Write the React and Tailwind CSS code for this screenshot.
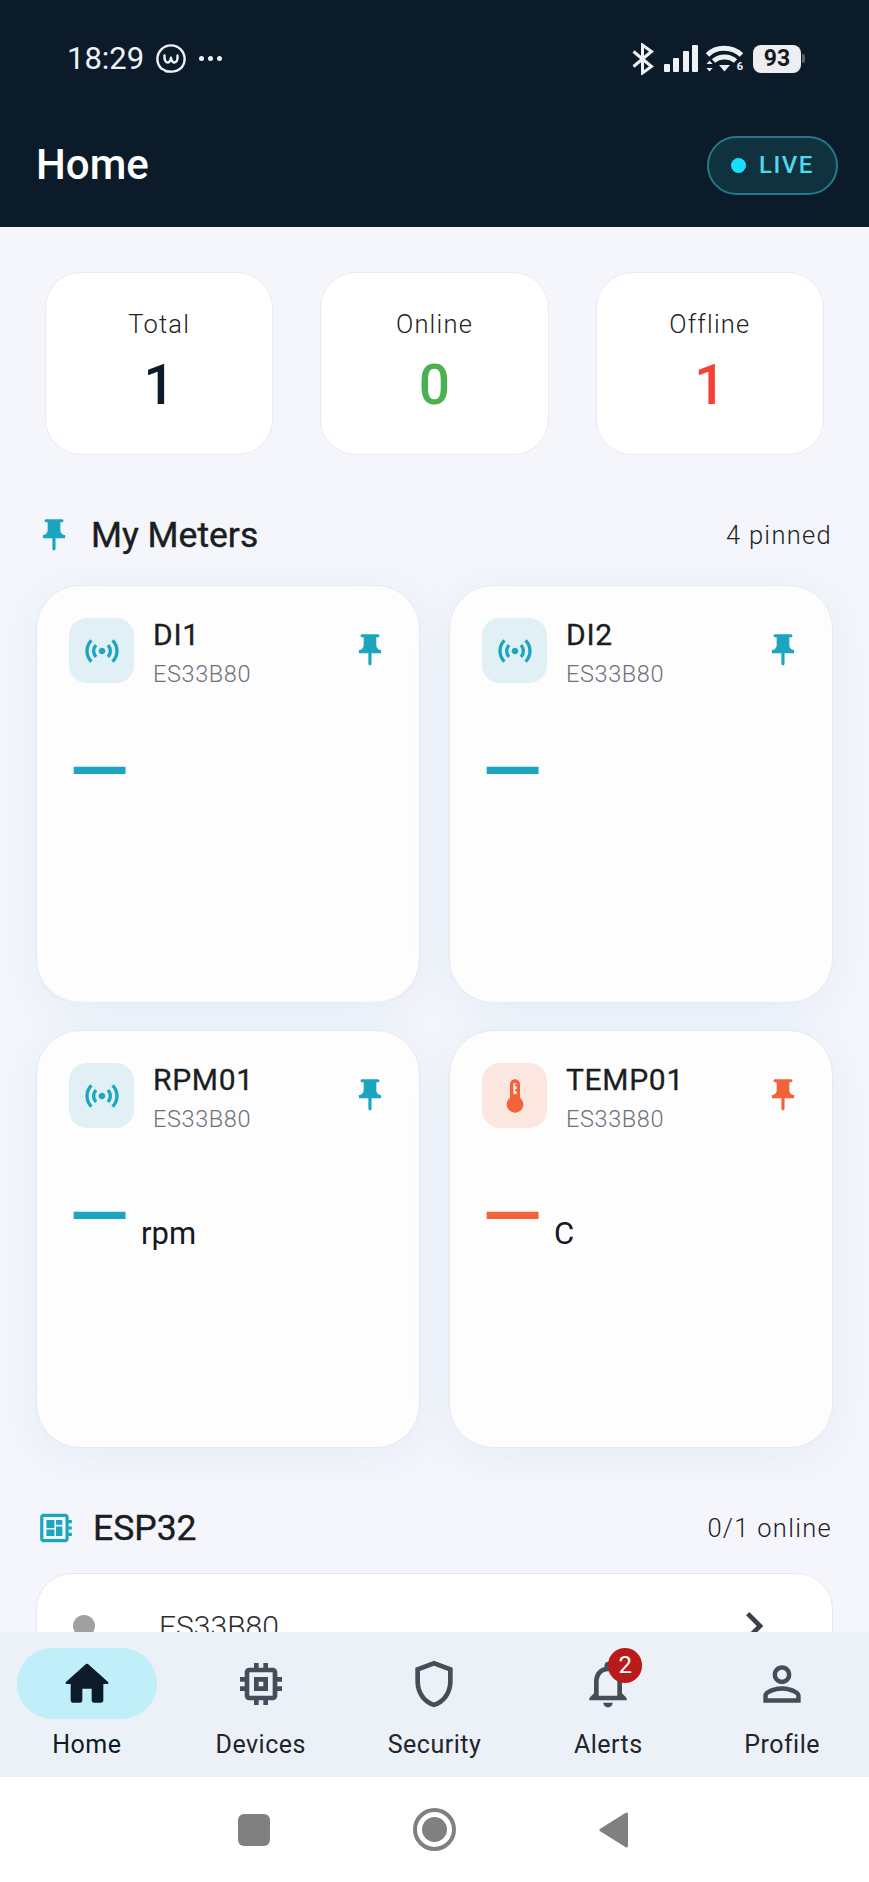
import React from 'react';

const paths = {
  pin: 'M16 9V4h1c.55 0 1-.45 1-1s-.45-1-1-1H7c-.55 0-1 .45-1 1s.45 1 1 1h1v5c0 1.66-1.34 3-3 3v2h5.97v7l1 1 1-1v-7H19v-2c-1.66 0-3-1.34-3-3z',
  sensors: 'M7.76 16.24C6.67 15.16 6 13.66 6 12s.67-3.16 1.76-4.24l1.42 1.42C8.45 9.9 8 10.9 8 12c0 1.1.45 2.1 1.17 2.83l-1.41 1.41zm8.48 0C17.33 15.16 18 13.66 18 12s-.67-3.16-1.76-4.24l-1.42 1.42C15.55 9.9 16 10.9 16 12c0 1.1-.45 2.1-1.17 2.83l1.41 1.41zM12 10c-1.1 0-2 .9-2 2s.9 2 2 2 2-.9 2-2-.9-2-2-2zm8 2c0 2.21-.9 4.21-2.35 5.65l1.42 1.42C20.88 17.26 22 14.76 22 12s-1.12-5.26-2.93-7.07l-1.42 1.42C19.1 7.79 20 9.79 20 12zM6.35 6.35L4.93 4.93C3.12 6.74 2 9.24 2 12s1.12 5.26 2.93 7.07l1.42-1.42C4.9 16.21 4 14.21 4 12s.9-4.21 2.35-5.65z',
  thermo: 'M15 13V5c0-1.66-1.34-3-3-3S9 3.34 9 5v8c-1.21.91-2 2.37-2 4 0 2.76 2.24 5 5 5s5-2.24 5-5c0-1.63-.79-3.09-2-4zm-4-8c0-.55.45-1 1-1s1 .45 1 1h-1v1h1v2h-1v1h1v2h-2V5z',
  board: 'M22 9V7h-2V5c0-1.1-.9-2-2-2H4c-1.1 0-2 .9-2 2v14c0 1.1.9 2 2 2h14c1.1 0 2-.9 2-2v-2h2v-2h-2v-2h2v-2h-2V9h2zm-4 10H4V5h14v14zM6 13h5v4H6zm6-6h4v3h-4zM6 7h5v5H6zm6 4h4v6h-4z',
  chevron: 'M10 6L8.59 7.41 13.17 12l-4.58 4.59L10 18l6-6z',
  home: 'M10 19v-5h4v5c0 .55.45 1 1 1h3c.55 0 1-.45 1-1v-7h1.7c.46 0 .68-.57.33-.87L12.67 3.6c-.38-.34-.96-.34-1.34 0l-8.36 7.53c-.34.3-.13.87.33.87H5v7c0 .55.45 1 1 1h3c.55 0 1-.45 1-1z',
  chip: 'M15 9H9v6h6V9zm-2 4h-2v-2h2v2zm8-2V9h-2V7c0-1.1-.9-2-2-2h-2V3h-2v2h-2V3H9v2H7c-1.1 0-2 .9-2 2v2H3v2h2v2H3v2h2v2c0 1.1.9 2 2 2h2v2h2v-2h2v2h2v-2h2c1.1 0 2-.9 2-2v-2h2v-2h-2v-2h2zm-4 6H7V7h10v10z',
  shield: 'M12 2L4 5v6.09c0 5.05 3.41 9.76 8 10.91 4.59-1.15 8-5.86 8-10.91V5l-8-3zm6 9.09c0 4-2.55 7.7-6 8.83-3.45-1.13-6-4.82-6-8.83v-4.7l6-2.25 6 2.25v4.7z',
  bell: 'M12 22c1.1 0 2-.9 2-2h-4c0 1.1.9 2 2 2zm6-6v-5c0-3.07-1.63-5.64-4.5-6.32V4c0-.83-.67-1.5-1.5-1.5s-1.5.67-1.5 1.5v.68C7.64 5.36 6 7.92 6 11v5l-2 2v1h16v-1l-2-2zm-2 1H8v-6c0-2.48 1.51-4.5 4-4.5s4 2.02 4 4.5v6z',
  person: 'M12 5.9c1.16 0 2.1.94 2.1 2.1s-.94 2.1-2.1 2.1S9.9 9.16 9.9 8s.94-2.1 2.1-2.1m0 9c2.97 0 6.1 1.46 6.1 2.1v1.1H5.9V17c0-.64 3.13-2.1 6.1-2.1M12 4C9.79 4 8 5.79 8 8s1.79 4 4 4 4-1.79 4-4-1.79-4-4-4zm0 9c-2.67 0-8 1.34-8 4v3h16v-3c0-2.66-5.33-4-8-4z',
};

const Icon = ({ d, className }) => (
  <svg viewBox="0 0 24 24" fill="currentColor" className={className}>
    <path d={d} />
  </svg>
);

const stats = [
  { label: 'Total', value: '1', color: 'text-[#0c1b2a]' },
  { label: 'Online', value: '0', color: 'text-[#4caf50]' },
  { label: 'Offline', value: '1', color: 'text-[#f44336]' },
];

const meters = [
  { name: 'DI1', icon: paths.sensors, tone: 'teal' },
  { name: 'DI2', icon: paths.sensors, tone: 'teal' },
  { name: 'RPM01', icon: paths.sensors, tone: 'teal', unit: 'rpm' },
  { name: 'TEMP01', icon: paths.thermo, tone: 'orange', unit: 'C' },
];

const navItems = [
  { label: 'Home', icon: paths.home, active: true },
  { label: 'Devices', icon: paths.chip },
  { label: 'Security', icon: paths.shield },
  { label: 'Alerts', icon: paths.bell, badge: '2' },
  { label: 'Profile', icon: paths.person },
];

const StatusBar = () => (
  <div className="h-[135px] flex items-center justify-between pl-[67px] pr-[64px] pb-[18px] text-[#eef2f7]">
    <div className="flex items-center">
      <span className="text-[31px] leading-none">18:29</span>
      <svg viewBox="0 0 30 30" className="w-[30px] h-[30px] ml-[12px]" fill="none" stroke="currentColor" strokeWidth="2.4" strokeLinecap="round" strokeLinejoin="round">
        <path d="M9 26.500c1.500 1.400 3 1.200 4.500.8C21 29 28.600 23.600 28.600 15 28.600 7.400 22.600 1.400 15 1.400S1.400 7.400 1.400 15c0 3.600 1.300 6.800 3.600 9.200.8.9 2.400 1.100 4 2.300z" />
        <path d="M8.500 11.500c-.4 4.500 1.200 7 3 7 1.600 0 3-2 3.500-4.800.5 2.800 1.900 4.800 3.500 4.800 1.800 0 3.400-2.500 3-7" />
      </svg>
      <div className="flex gap-[4px] ml-[13px]">
        <span className="w-[5px] h-[5px] rounded-full bg-[#eef2f7]" />
        <span className="w-[5px] h-[5px] rounded-full bg-[#eef2f7]" />
        <span className="w-[5px] h-[5px] rounded-full bg-[#eef2f7]" />
      </div>
    </div>
    <div className="flex items-center">
      <svg viewBox="0 0 22 32" className="w-[22px] h-[32px]" fill="none" stroke="currentColor" strokeWidth="3" strokeLinejoin="miter">
        <path d="M1.500 8.500l18 15L10.500 30V2l9 6.500-18 15" />
      </svg>
      <svg viewBox="0 0 34 27" className="w-[34px] h-[27px] ml-[10px]" fill="currentColor">
        <rect x="0" y="19" width="6" height="8" rx="1" />
        <rect x="9" y="13" width="6" height="14" rx="1" />
        <rect x="19" y="6" width="6" height="21" rx="1" />
        <rect x="28" y="0" width="6" height="27" rx="1" />
      </svg>
      <div className="relative ml-[8px] w-[37px] h-[27px]">
        <svg viewBox="0 0 37 27" className="w-[37px] h-[27px]" fill="none" stroke="currentColor">
          <path d="M1.500 10C10 1 26 1 35.500 10" strokeWidth="5" />
          <path d="M7.500 16c6-5.500 16-5.500 22 0" strokeWidth="5" />
          <path d="M13 20h11l-5.500 6.500z" fill="currentColor" stroke="none" />
          <path d="M3.500 15.500l3 3.500h-6z M3.500 26.500l3-3.500h-6z" fill="currentColor" stroke="none" />
        </svg>
        <span className="absolute right-0 bottom-0 text-[11px] leading-[11px] font-bold">6</span>
      </div>
      <div className="ml-[10px] w-[48px] h-[28px] rounded-[8px] bg-[#eceef2] flex items-center justify-center text-[23px] font-bold text-[#15181d] leading-none">93</div>
      <div className="ml-[1px] w-[3px] h-[9px] rounded-r-[2px] bg-[#5c6066]" />
    </div>
  </div>
);

const StatCard = ({ label, value, color }) => (
  <div className="h-[183px] rounded-[36px] bg-white border border-[#e9ebf1] flex flex-col items-center pt-[34px]">
    <span className="text-[25.500px] leading-[34px] font-light tracking-[1.200px] text-[#1f2327]">{label}</span>
    <span className={`mt-[14px] text-[55px] leading-[60px] font-medium ${color}`}>{value}</span>
  </div>
);

const SectionHeader = ({ icon, iconClass, title, note, gap }) => (
  <div className="flex items-center justify-between">
    <div className={`flex items-center ${gap}`}>
      <Icon d={icon} className={iconClass} />
      <span className="text-[35.500px] leading-[44px] font-normal [-webkit-text-stroke:0.4px_#1a1d21] text-[#1a1d21]">{title}</span>
    </div>
    <span className="text-[25.500px] leading-[44px] font-light tracking-[1.300px] text-[#1f2327]">{note}</span>
  </div>
);

const MeterCard = ({ name, icon, tone, unit }) => {
  const teal = tone === 'teal';
  const fg = teal ? 'text-[#1ba5bf]' : 'text-[#f4623a]';
  return (
    <div className="h-[418px] rounded-[44px] bg-[#fdfdfe] border border-[#e6e9f0] shadow-[0_8px_40px_rgba(120,170,225,0.12)] pt-[32px] pl-[32px] pr-[30px]">
      <div className="flex items-start">
        <div className={`w-[65px] h-[65px] rounded-[18px] flex items-center justify-center ${teal ? 'bg-[#e1f0f5]' : 'bg-[#fce6e0]'} ${fg}`}>
          <Icon d={icon} className="w-[40px] h-[40px]" />
        </div>
        <div className="ml-[19px] flex-1">
          <div className="text-[30px] leading-[34px] font-normal tracking-[0.7px] [-webkit-text-stroke:0.3px_#1a1d21] text-[#1a1d21]">{name}</div>
          <div className="mt-[5px] text-[23.500px] leading-[34px] font-light tracking-[0.6px] text-[#6e7277]">ES33B80</div>
        </div>
        <Icon d={paths.pin} className={`w-[38px] h-[38px] mt-[13px] ${fg}`} />
      </div>
      <div className="mt-[41px] flex items-start h-[110px]">
        <span className={`text-[78px] leading-[80px] font-medium ${fg}`}>—</span>
        {unit && <span className="text-[31px] leading-[40px] mt-[37px] ml-[12px] text-[#15181d]">{unit}</span>}
      </div>
    </div>
  );
};

const BottomNav = () => (
  <nav className="h-[145px] shrink-0 bg-[#ecf0f7] grid grid-cols-5 pt-[16px]">
    {navItems.map((item) => (
      <div key={item.label} className="flex flex-col items-center">
        <div className={`relative w-[140px] h-[71px] rounded-[36px] flex items-center justify-center ${item.active ? 'bg-[#c0eef9] text-[#0c1b2a]' : 'text-[#454d59]'}`}>
          <Icon d={item.icon} className="w-[56px] h-[56px]" />
          {item.badge && (
            <span className="absolute left-[70px] top-0 w-[34px] h-[35px] rounded-full bg-[#bb1a1a] text-white text-[24px] leading-[35px] text-center">{item.badge}</span>
          )}
        </div>
        <span className={`mt-[9px] text-[25px] leading-[34px] tracking-[0.5px] ${item.active ? 'text-[#0c1b2a]' : 'text-[#20252b]'}`}>{item.label}</span>
      </div>
    ))}
  </nav>
);

const AndroidBar = () => (
  <div className="h-[105px] shrink-0 bg-white flex items-center justify-center gap-[143px] pr-[3px]">
    <div className="w-[32px] h-[32px] rounded-[6px] bg-[#808080]" />
    <div className="w-[43px] h-[43px] rounded-full border-[4px] border-[#808080] flex items-center justify-center">
      <div className="w-[25px] h-[25px] rounded-full bg-[#808080]" />
    </div>
    <svg viewBox="0 0 29 36" className="w-[29px] h-[36px]" fill="#808080" stroke="#808080" strokeWidth="3" strokeLinejoin="round">
      <path d="M27.500 2L2 18l25.500 16z" />
    </svg>
  </div>
);

export default function App() {
  return (
    <div className="w-[869px] h-[1882px] flex flex-col overflow-hidden bg-[#f4f6fb] font-['Roboto',sans-serif]">
      <header className="h-[227px] shrink-0 bg-[#0c1b2a]">
        <StatusBar />
        <div className="flex items-center justify-between pl-[36px] pr-[31px]">
          <h1 className="text-[42px] leading-[60px] font-medium text-white">Home</h1>
          <div className="w-[131px] h-[59px] rounded-full border-[2px] border-[#23798a] bg-[#10323f] flex items-center pl-[22px]">
            <span className="w-[15px] h-[15px] rounded-full bg-[#18dfff]" />
            <span className="ml-[13px] text-[24px] leading-none font-medium tracking-[1.500px] text-[#4fd8ee]">LIVE</span>
          </div>
        </div>
      </header>

      <main className="flex-1 min-h-0 overflow-hidden">
        <div className="mt-[45px] mx-[45px] grid grid-cols-3 gap-[47px]">
          {stats.map((s) => <StatCard key={s.label} {...s} />)}
        </div>

        <div className="mt-[58px] mx-[37px]">
          <SectionHeader icon={paths.pin} iconClass="w-[38px] h-[38px] text-[#1ba5bf] -ml-[2px]" title="My Meters" note="4 pinned" gap="gap-[18px]" />
        </div>

        <div className="mt-[28px] mx-[36px] grid grid-cols-2 gap-x-[29px] gap-y-[27px]">
          {meters.map((m) => <MeterCard key={m.name} {...m} />)}
        </div>

        <div className="mt-[58px] mx-[37px]">
          <SectionHeader icon={paths.board} iconClass="w-[38px] h-[38px] text-[#1ba5bf]" title="ESP32" note="0/1 online" gap="gap-[18px]" />
        </div>

        <div className="mt-[23px] mx-[36px] h-[120px] rounded-[36px] bg-white border border-[#e6e9f0] flex items-start pt-[34px] pl-[36px] pr-[50px]">
          <span className="mt-[7px] w-[22px] h-[22px] rounded-full bg-[#a0a0a0]" />
          <span className="ml-[64px] flex-1 text-[30px] leading-[38px] font-light text-[#2a2e33]">ES33B80</span>
          <Icon d={paths.chevron} className="w-[56px] h-[56px] -mt-[10px] text-[#3c4148]" />
        </div>
      </main>

      <BottomNav />
      <AndroidBar />
    </div>
  );
}
